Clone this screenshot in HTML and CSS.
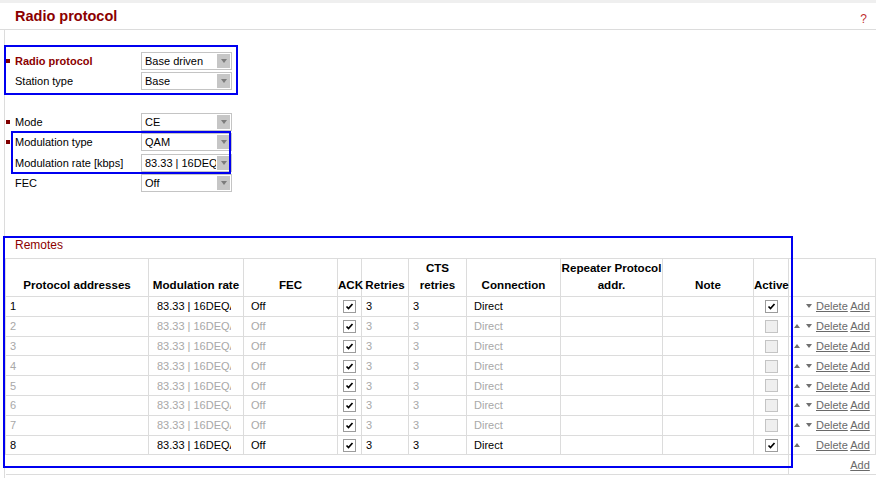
FILE: index.html
```html
<!DOCTYPE html>
<html lang="en">
<head>
    <meta charset="UTF-8">
    <title>Radio protocol</title>
    <link rel="stylesheet" href="styles.css">
</head>
<body>
    <div class="topbar"></div>
    <div class="page-head">
        <h1>Radio protocol</h1>
        <a class="help" href="#">?</a>
    </div>

    <div class="content">
        <div class="group">
            <div class="form-row">
                <span class="mark"></span>
                <label class="req">Radio protocol</label>
                <div class="select"><span>Base driven</span><i></i></div>
            </div>
            <div class="form-row">
                <span class="mark none"></span>
                <label>Station type</label>
                <div class="select"><span>Base</span><i></i></div>
            </div>
        </div>

        <div class="group">
            <div class="form-row">
                <span class="mark"></span>
                <label>Mode</label>
                <div class="select"><span>CE</span><i></i></div>
            </div>
            <div class="form-row">
                <span class="mark"></span>
                <label>Modulation type</label>
                <div class="select"><span>QAM</span><i></i></div>
            </div>
            <div class="form-row">
                <span class="mark none"></span>
                <label>Modulation rate [kbps]</label>
                <div class="select"><span>83.33 | 16DEQAM</span><i></i></div>
            </div>
            <div class="form-row">
                <span class="mark none"></span>
                <label>FEC</label>
                <div class="select"><span>Off</span><i></i></div>
            </div>
        </div>

        <h2 class="section-title">Remotes</h2>

        <table class="remotes">
            <colgroup>
                <col class="c-addr"><col class="c-rate"><col class="c-fec"><col class="c-ack">
                <col class="c-retries"><col class="c-cts"><col class="c-conn"><col class="c-rep">
                <col class="c-note"><col class="c-active"><col class="c-act">
            </colgroup>
            <tr>
                <th>Protocol addresses</th>
                <th>Modulation rate</th>
                <th>FEC</th>
                <th>ACK</th>
                <th>Retries</th>
                <th>CTS<br>retries</th>
                <th>Connection</th>
                <th>Repeater Protocol<br>addr.</th>
                <th>Note</th>
                <th>Active</th>
                <th></th>
            </tr>
            <tr class="on">
                <td>1</td>
                <td><span class="sel rate">83.33 | 16DEQAM</span></td>
                <td><span class="sel">Off</span></td>
                <td class="cbx"><span class="cb"><svg viewBox="0 0 11 11"><path d="M2.5 5.5 L4.5 7.5 L8.5 3"/></svg></span></td>
                <td>3</td>
                <td>3</td>
                <td><span class="sel">Direct</span></td>
                <td></td>
                <td></td>
                <td class="cbx"><span class="cb"><svg viewBox="0 0 11 11"><path d="M2.5 5.5 L4.5 7.5 L8.5 3"/></svg></span></td>
                <td class="act"><span class="up none"></span><span class="down"></span><a href="#">Delete</a> <a href="#">Add</a></td>
            </tr>
            <tr class="off">
                <td>2</td>
                <td><span class="sel rate">83.33 | 16DEQAM</span></td>
                <td><span class="sel">Off</span></td>
                <td class="cbx"><span class="cb"><svg viewBox="0 0 11 11"><path d="M2.5 5.5 L4.5 7.5 L8.5 3"/></svg></span></td>
                <td>3</td>
                <td>3</td>
                <td><span class="sel">Direct</span></td>
                <td></td>
                <td></td>
                <td class="cbx"><span class="cb disabled"></span></td>
                <td class="act"><span class="up"></span><span class="down"></span><a href="#">Delete</a> <a href="#">Add</a></td>
            </tr>
            <tr class="off">
                <td>3</td>
                <td><span class="sel rate">83.33 | 16DEQAM</span></td>
                <td><span class="sel">Off</span></td>
                <td class="cbx"><span class="cb"><svg viewBox="0 0 11 11"><path d="M2.5 5.5 L4.5 7.5 L8.5 3"/></svg></span></td>
                <td>3</td>
                <td>3</td>
                <td><span class="sel">Direct</span></td>
                <td></td>
                <td></td>
                <td class="cbx"><span class="cb disabled"></span></td>
                <td class="act"><span class="up"></span><span class="down"></span><a href="#">Delete</a> <a href="#">Add</a></td>
            </tr>
            <tr class="off">
                <td>4</td>
                <td><span class="sel rate">83.33 | 16DEQAM</span></td>
                <td><span class="sel">Off</span></td>
                <td class="cbx"><span class="cb"><svg viewBox="0 0 11 11"><path d="M2.5 5.5 L4.5 7.5 L8.5 3"/></svg></span></td>
                <td>3</td>
                <td>3</td>
                <td><span class="sel">Direct</span></td>
                <td></td>
                <td></td>
                <td class="cbx"><span class="cb disabled"></span></td>
                <td class="act"><span class="up"></span><span class="down"></span><a href="#">Delete</a> <a href="#">Add</a></td>
            </tr>
            <tr class="off">
                <td>5</td>
                <td><span class="sel rate">83.33 | 16DEQAM</span></td>
                <td><span class="sel">Off</span></td>
                <td class="cbx"><span class="cb"><svg viewBox="0 0 11 11"><path d="M2.5 5.5 L4.5 7.5 L8.5 3"/></svg></span></td>
                <td>3</td>
                <td>3</td>
                <td><span class="sel">Direct</span></td>
                <td></td>
                <td></td>
                <td class="cbx"><span class="cb disabled"></span></td>
                <td class="act"><span class="up"></span><span class="down"></span><a href="#">Delete</a> <a href="#">Add</a></td>
            </tr>
            <tr class="off">
                <td>6</td>
                <td><span class="sel rate">83.33 | 16DEQAM</span></td>
                <td><span class="sel">Off</span></td>
                <td class="cbx"><span class="cb"><svg viewBox="0 0 11 11"><path d="M2.5 5.5 L4.5 7.5 L8.5 3"/></svg></span></td>
                <td>3</td>
                <td>3</td>
                <td><span class="sel">Direct</span></td>
                <td></td>
                <td></td>
                <td class="cbx"><span class="cb disabled"></span></td>
                <td class="act"><span class="up"></span><span class="down"></span><a href="#">Delete</a> <a href="#">Add</a></td>
            </tr>
            <tr class="off">
                <td>7</td>
                <td><span class="sel rate">83.33 | 16DEQAM</span></td>
                <td><span class="sel">Off</span></td>
                <td class="cbx"><span class="cb"><svg viewBox="0 0 11 11"><path d="M2.5 5.5 L4.5 7.5 L8.5 3"/></svg></span></td>
                <td>3</td>
                <td>3</td>
                <td><span class="sel">Direct</span></td>
                <td></td>
                <td></td>
                <td class="cbx"><span class="cb disabled"></span></td>
                <td class="act"><span class="up"></span><span class="down"></span><a href="#">Delete</a> <a href="#">Add</a></td>
            </tr>
            <tr class="on">
                <td>8</td>
                <td><span class="sel rate">83.33 | 16DEQAM</span></td>
                <td><span class="sel">Off</span></td>
                <td class="cbx"><span class="cb"><svg viewBox="0 0 11 11"><path d="M2.5 5.5 L4.5 7.5 L8.5 3"/></svg></span></td>
                <td>3</td>
                <td>3</td>
                <td><span class="sel">Direct</span></td>
                <td></td>
                <td></td>
                <td class="cbx"><span class="cb"><svg viewBox="0 0 11 11"><path d="M2.5 5.5 L4.5 7.5 L8.5 3"/></svg></span></td>
                <td class="act"><span class="up"></span><span class="down none"></span><a href="#">Delete</a> <a href="#">Add</a></td>
            </tr>
            <tr class="add-row">
                <td colspan="10"></td>
                <td class="act"><span class="up none"></span><span class="down none"></span><a class="ghost" href="#">Delete</a> <a href="#">Add</a></td>
            </tr>
        </table>

        <!-- highlight frames drawn over the form -->
        <div class="frame frame-protocol"></div>
        <div class="frame frame-modulation"></div>
        <div class="frame frame-remotes"></div>
    </div>
</body>
</html>
```

FILE: styles.css
```css
body { margin: 0; font-family: "Liberation Sans", Arial, sans-serif; font-size: 11px; color: #000; background: #fff; overflow: hidden; }
.topbar { height: 3px; background: #efefef; }
.page-head { height: 26px; border-bottom: 1px solid #dcdcdc; display: flex; align-items: center; justify-content: space-between; padding: 0 9px 0 15px; }
.page-head h1 { margin: 0; font-size: 14.5px; font-weight: bold; color: #8b0000; }
.help { color: #c03030; font-size: 12px; text-decoration: none; margin-top: 5px; }

.content { margin-left: 4px; border-left: 1px solid #dcdcdc; padding-top: 20.5px; position: relative; height: 448px; }
.group + .group { margin-top: 20px; }
.form-row { display: flex; align-items: center; height: 20.5px; }
.mark { flex: none; width: 4px; height: 4px; margin: 0 5px 0 1px; background: #800000; }
.mark.none { background: none; }
.form-row label { flex: none; width: 126px; }
.form-row label.req { color: #8b0000; font-weight: bold; }
.select { box-sizing: border-box; width: 91px; height: 18px; border: 1px solid #c4c4c4; display: flex; align-items: stretch; background: #fff; }
.select span { flex: 1; padding-left: 3px; line-height: 16px; overflow: hidden; white-space: nowrap; }
.select i { flex: none; width: 13px; margin: 1px; background: #c6c6c6; display: flex; align-items: center; justify-content: center; }
.select i::after { content: ""; border-left: 3px solid transparent; border-right: 3px solid transparent; border-top: 4px solid #7c7c7c; }

.section-title { margin: 41.5px 0 3px 10px; height: 20px; line-height: 20px; font-size: 12px; font-weight: normal; color: #8b0000; }

.remotes { border-collapse: collapse; table-layout: fixed; width: 871px; }
.c-addr { width: 143px; }
.c-rate { width: 95px; }
.c-fec { width: 94px; }
.c-ack { width: 24px; }
.c-retries { width: 47px; }
.c-cts { width: 58px; }
.c-conn { width: 94px; }
.c-rep { width: 102px; }
.c-note { width: 91px; }
.c-active { width: 35px; }
.remotes th, .remotes td { border: 1px solid #dcdcdc; }
.remotes th { height: 33px; padding: 0 0 3px; font-size: 11.6px; font-weight: bold; line-height: 17px; text-align: center; vertical-align: bottom; white-space: nowrap; overflow: visible; }
.remotes td { height: 18.8px; padding: 0 4px; font-size: 11px; white-space: nowrap; overflow: hidden; }
.remotes tr.off td { color: #a8a8a8; }
.sel { margin-left: 3px; }
.sel.rate { display: inline-block; vertical-align: top; width: 74px; margin-left: 4px; overflow: hidden; }
.remotes td.cbx { padding: 0; text-align: center; }
.cb { display: inline-block; box-sizing: border-box; width: 13px; height: 13px; border: 1px solid #9c9c9c; background: #fff; vertical-align: middle; }
.cb svg { display: block; width: 11px; height: 11px; fill: none; stroke: #000; stroke-width: 1.7; }
.cb.disabled { background: #efefef; border-color: #c4c4c4; }

.remotes td.act { padding: 0; }
.act a { color: #6a6a6a; }
.act a.ghost { visibility: hidden; }
.up, .down { display: inline-block; vertical-align: top; margin-top: 4px; border-left: 3px solid transparent; border-right: 3px solid transparent; }
.up { margin-left: 5px; border-bottom: 4px solid #707070; }
.down { margin-left: 6px; margin-right: 4px; border-top: 4px solid #707070; }
.up.none { border-bottom-color: transparent; }
.down.none { border-top-color: transparent; }
.add-row td { border-left: none; border-right: none; }
.add-row td.act { border-left: 1px solid #dcdcdc; }

.frame { position: absolute; box-sizing: border-box; border: 2px solid #0000f0; pointer-events: none; }
.frame-protocol { left: -1px; top: 15px; width: 234px; height: 50px; }
.frame-modulation { left: 6px; top: 101px; width: 220px; height: 43px; }
.frame-remotes { left: -2px; top: 206px; width: 790px; height: 232px; }
```
